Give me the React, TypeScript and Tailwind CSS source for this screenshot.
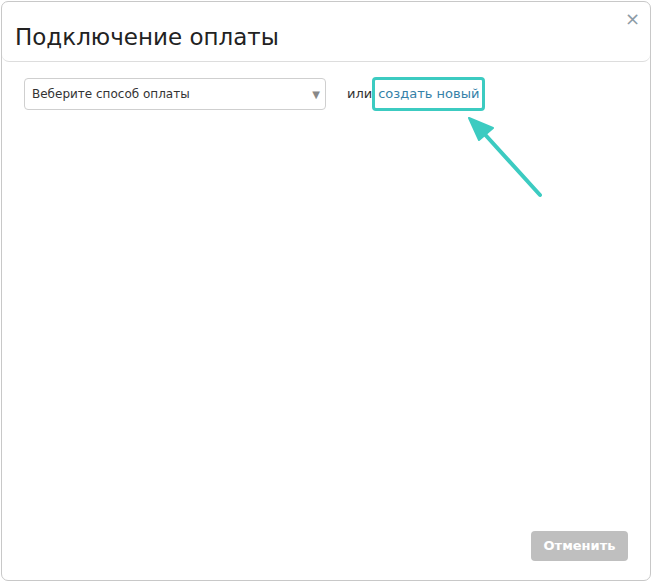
import React from "react";

export default function App() {
  return (
    <div
      className="w-[652px] h-[582px] bg-white p-[1px]"
      style={{ fontFamily: '"DejaVu Sans", Verdana, sans-serif' }}
    >
      <div className="relative w-full h-full border border-[#c8c8c8] rounded-[7px] flex flex-col">
        <div className="h-[60px] border-b border-[#dddddd] rounded-b-[7px] flex items-start justify-between pl-[13px] pr-[10px]">
          <div className="text-[23px] leading-none text-[#222] mt-[24px]">Подключение оплаты</div>
          <button className="mt-[8px] text-[#8d9ba6] text-[18px] leading-none">×</button>
        </div>
        <div className="flex items-center pl-[22px] pt-[15px]">
          <div className="w-[302px] h-[32px] border border-[#cfcfcf] rounded-[4px] flex items-center justify-between pl-[7px] pr-[5px] text-[12px] text-[#333]">
            <span>Веберите способ оплаты</span>
            <span className="text-[#888] text-[10px]">▼</span>
          </div>
          <span className="ml-[21px] text-[13px] text-[#333]">или</span>
          <span className="border-[3px] border-[#3ccbc1] rounded-[4px] px-[3px] h-[34px] flex items-center text-[13px] text-[#3581a8]">
            создать новый
          </span>
        </div>
        <div className="flex-1" />
        <div className="flex justify-end pr-[22px] pb-[19px]">
          <button className="w-[97px] h-[30px] rounded-[4px] bg-[#bfbfbf] text-white text-[13px] font-bold">
            Отменить
          </button>
        </div>
        <svg className="absolute left-[450px] top-[100px]" width="110" height="110" viewBox="0 0 110 110">
          <line x1="88" y1="93" x2="28" y2="27" stroke="#3ccbc1" strokeWidth="4" strokeLinecap="round" />
          <polygon points="17,16 41,26 27,38" fill="#3ccbc1" stroke="#3ccbc1" strokeWidth="2" strokeLinejoin="round" />
        </svg>
      </div>
    </div>
  );
}
